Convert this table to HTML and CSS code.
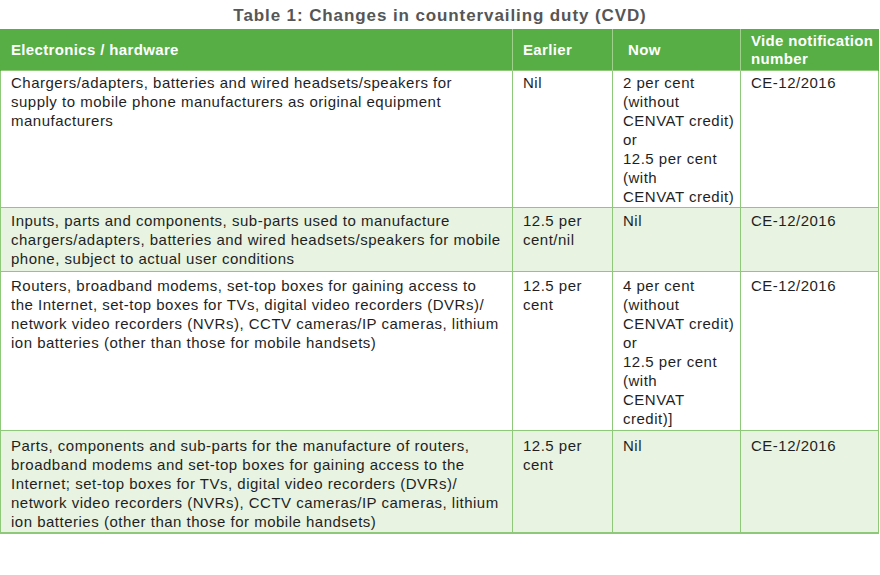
FILE: index.html
```html
<!DOCTYPE html>
<html lang="en">
<head>
<meta charset="utf-8">
<title>Table 1: Changes in countervailing duty (CVD)</title>
<link rel="stylesheet" href="styles.css">
</head>
<body>
<h1 class="title">Table 1: Changes in countervailing duty (CVD)</h1>
<table class="duty">
  <colgroup>
    <col class="c-item">
    <col class="c-earlier">
    <col class="c-now">
    <col class="c-vide">
  </colgroup>
  <thead>
    <tr>
      <th>Electronics / hardware</th>
      <th>Earlier</th>
      <th class="th-now">Now</th>
      <th>Vide notification<br>number</th>
    </tr>
  </thead>
  <tbody>
    <tr class="r1">
      <td>Chargers/adapters, batteries and wired headsets/speakers for<br>supply to mobile phone manufacturers as original equipment<br>manufacturers</td>
      <td>Nil</td>
      <td>2 per cent<br>(without<br>CENVAT credit)<br>or<br>12.5 per cent<br>(with<br>CENVAT credit)</td>
      <td>CE-12/2016</td>
    </tr>
    <tr class="alt r2">
      <td>Inputs, parts and components, sub-parts used to manufacture<br>chargers/adapters, batteries and wired headsets/speakers for mobile<br>phone, subject to actual user conditions</td>
      <td>12.5 per<br>cent/nil</td>
      <td>Nil</td>
      <td>CE-12/2016</td>
    </tr>
    <tr class="r3">
      <td>Routers, broadband modems, set-top boxes for gaining access to<br>the Internet, set-top boxes for TVs, digital video recorders (DVRs)/<br>network video recorders (NVRs), CCTV cameras/IP cameras, lithium<br>ion batteries (other than those for mobile handsets)</td>
      <td>12.5 per<br>cent</td>
      <td>4 per cent<br>(without<br>CENVAT credit)<br>or<br>12.5 per cent<br>(with<br>CENVAT<br>credit)]</td>
      <td>CE-12/2016</td>
    </tr>
    <tr class="alt r4">
      <td>Parts, components and sub-parts for the manufacture of routers,<br>broadband modems and set-top boxes for gaining access to the<br>Internet; set-top boxes for TVs, digital video recorders (DVRs)/<br>network video recorders (NVRs), CCTV cameras/IP cameras, lithium<br>ion batteries (other than those for mobile handsets)</td>
      <td>12.5 per<br>cent</td>
      <td>Nil</td>
      <td>CE-12/2016</td>
    </tr>
  </tbody>
</table>
</body>
</html>
```
FILE: styles.css
```css
html, body {
  margin: 0;
  padding: 0;
  background: #ffffff;
}

body {
  width: 880px;
  font-family: "Liberation Sans", Arial, sans-serif;
  color: #1f1f1f;
}

.title {
  margin: 0;
  padding: 6px 0 3px;
  font-size: 17px;
  line-height: 20px;
  font-weight: bold;
  letter-spacing: 0.9px;
  color: #565656;
  text-align: center;
}

.duty {
  width: 878px;
  border-collapse: collapse;
  table-layout: fixed;
  font-size: 15px;
  line-height: 19px;
  letter-spacing: 0.5px;
}

.c-item { width: 512px; }
.c-earlier { width: 100px; }
.c-now { width: 128px; }
.c-vide { width: 138px; }

.duty th {
  background: #56ae45;
  color: #ffffff;
  font-weight: bold;
  text-align: left;
  vertical-align: middle;
  height: 41px;
  padding: 0 4px 0 10px;
  line-height: 18px;
  letter-spacing: 0.35px;
  white-space: nowrap;
  border-left: 1px solid #9fd18c;
  border-right: 1px solid #9fd18c;
}

.duty th:first-child { border-left: 1px solid #56ae45; }
.duty th:last-child { border-right: 1px solid #56ae45; }

.duty .th-now { padding-left: 15px; }

.duty td {
  vertical-align: top;
  padding: 2px 4px 1px 10px;
  border: 1px solid #8ec879;
  white-space: nowrap;
}

.duty tbody tr:last-child td {
  border-bottom: 2px solid #8ec879;
}

.duty tr.alt td {
  background: #e8f3e1;
}

.duty tr.r2 td { padding-top: 3px; padding-bottom: 3px; }
.duty tr.r3 td { padding-top: 4px; padding-bottom: 2px; }
.duty tr.r4 td { padding-top: 5px; padding-bottom: 1px; }
```
